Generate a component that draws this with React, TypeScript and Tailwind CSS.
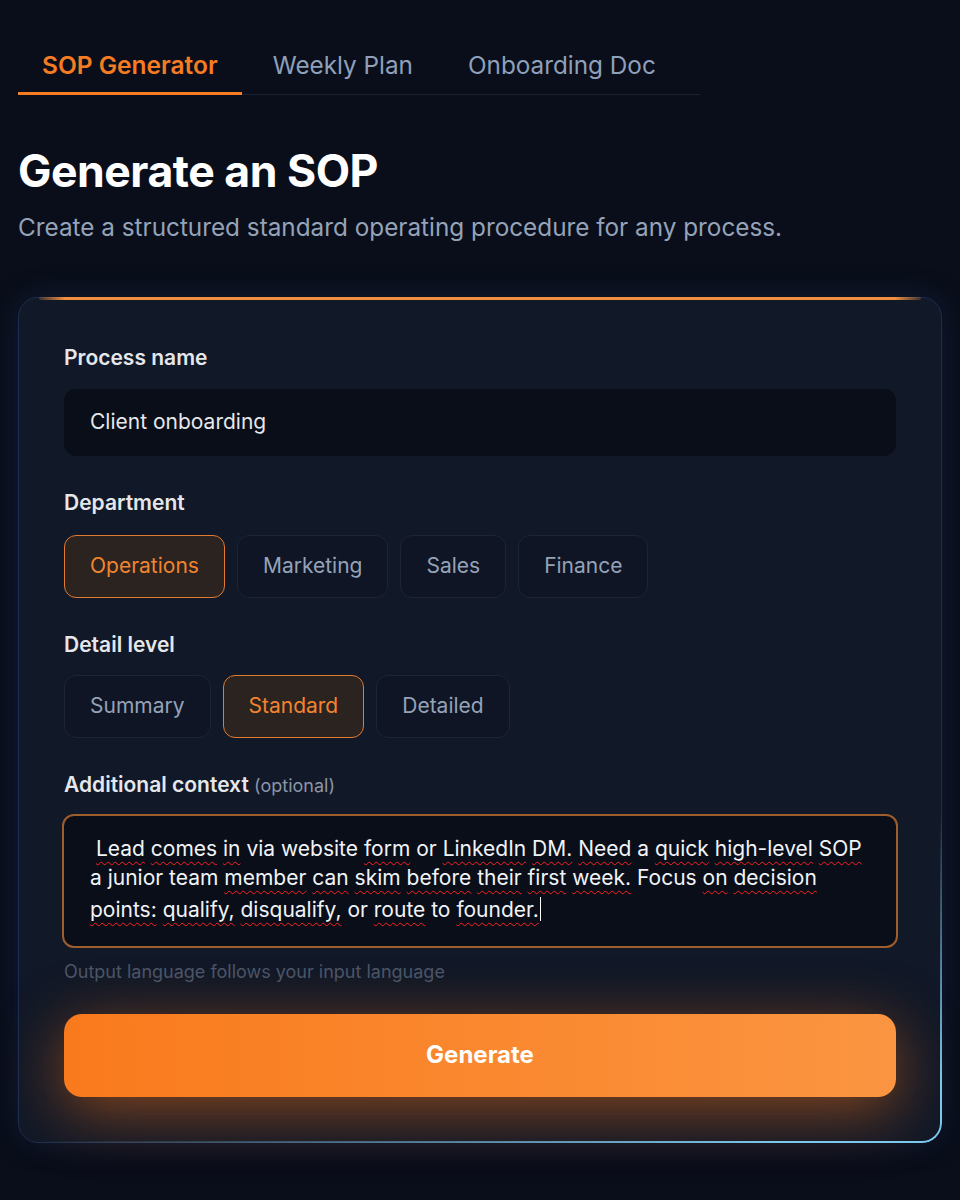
import React from "react";

const tabs = ["SOP Generator", "Weekly Plan", "Onboarding Doc"];
const departments = ["Operations", "Marketing", "Sales", "Finance"];
const levels = ["Summary", "Standard", "Detailed"];

// words flagged by the spell checker in the reference
const contextWords: [string, boolean][] = [
  ["Lead", true], ["comes", true], ["in", true], ["via", false], ["website", false],
  ["form", true], ["or", false], ["LinkedIn", true], ["DM.", true], ["Need", true],
  ["a", false], ["quick", true], ["high-level", true], ["SOP", true], ["a", false],
  ["junior", false], ["team", false], ["member", true], ["can", true], ["skim", true],
  ["before", true], ["their", true], ["first", true], ["week.", true], ["Focus", false],
  ["on", true], ["decision", true], ["points:", true], ["qualify,", true],
  ["disqualify,", true], ["or", false], ["route", true], ["to", false], ["founder.", true],
];

function Chip({ label, active }: { label: string; active?: boolean }) {
  return (
    <button
      className={
        active
          ? "h-[63px] px-[25px] rounded-xl border border-[#e27a2f] bg-[#2a2320] text-[21px] text-[#f2842f]"
          : "h-[63px] px-[25px] rounded-xl border border-[#1c2435] bg-[#0f1524] text-[21px] text-[#94a3b8]"
      }
    >
      {label}
    </button>
  );
}

export default function App() {
  return (
    <div className="min-h-[1200px] bg-[#0a0e1a] px-[18px] pt-[47px] font-['Inter','Noto_Sans',sans-serif]">
      {/* tabs */}
      <div className="flex w-[682px] gap-[7px] border-b border-[#1a2030]">
        {tabs.map((t, i) => (
          <div
            key={t}
            className={
              i === 0
                ? "-mb-px border-b-[3px] border-[#f57c22] px-6 pb-[8px] text-[24.5px] leading-9 font-semibold text-[#f57c22]"
                : "px-6 pb-[11px] text-[24.3px] leading-9 text-[#8ea0ba]"
            }
          >
            {t}
          </div>
        ))}
      </div>

      <h1 className="mt-[54px] text-[44.6px] font-bold leading-none tracking-[-0.5px] text-white">
        Generate an SOP
      </h1>
      <p className="mt-[17px] text-[24.3px] leading-8 text-[#94a3b8]">
        Create a structured standard operating procedure for any process.
      </p>

      {/* card */}
      <div className="relative mt-[54px] w-[924px] rounded-[20px] border border-[#1b2e50] bg-[#111827] px-[45px] pt-[45px] pb-[45px] shadow-[0_0_30px_rgba(30,64,120,0.25)]">
        <div className="absolute -top-px left-[20px] right-[20px] h-[3px] rounded-full bg-[linear-gradient(90deg,rgba(245,140,60,0.2),#f2903f_3%,#f2903f_97%,rgba(245,140,60,0.2))]" />
        <div className="pointer-events-none absolute -inset-px rounded-[20px] border-2 border-[#7cc8ec] [mask-image:linear-gradient(160deg,transparent_72%,black_95%)]" />

        <div className="text-[21px] leading-[30px] font-semibold text-[#e5e7eb]">Process name</div>
        <div className="mt-[16px] flex h-[67px] items-center rounded-xl bg-[#0a0e19] px-[26px] text-[21px] text-[#e5e7eb]">
          Client onboarding
        </div>

        <div className="mt-[32px] text-[21px] leading-[30px] font-semibold text-[#e5e7eb]">Department</div>
        <div className="mt-[17px] flex gap-3">
          {departments.map((d, i) => (
            <Chip key={d} label={d} active={i === 0} />
          ))}
        </div>

        <div className="mt-[32px] text-[21px] leading-[30px] font-semibold text-[#e5e7eb]">Detail level</div>
        <div className="mt-[15px] flex gap-3">
          {levels.map((l, i) => (
            <Chip key={l} label={l} active={i === 1} />
          ))}
        </div>

        <div className="mt-[32px] text-[21px] leading-[30px] font-semibold text-[#e5e7eb]">
          Additional context <span className="text-[18px] font-normal text-[#8b95a7]">(optional)</span>
        </div>
        <div className="-mx-[2px] mt-[13px] h-[134px] rounded-xl border-2 border-[#a05d2c] bg-[#0a0e19] px-[26px] pt-[18px] text-[21px] leading-[29.5px] text-[#f1f3f6]">
          <span>&nbsp;</span>
          {contextWords.map(([w, bad], i) => (
            <React.Fragment key={i}>
              <span className={bad ? "underline decoration-[#ff2020] decoration-wavy decoration-1 underline-offset-[5px]" : ""}>
                {w}
              </span>
              {i < contextWords.length - 1 ? " " : ""}
            </React.Fragment>
          ))}
          <span className="ml-px inline-block h-[24px] w-px translate-y-[4px] bg-white" />
        </div>
        <div className="mt-[11px] text-[18px] leading-[26px] text-[#4b5566]">Output language follows your input language</div>

        <button className="mt-[29px] flex h-[83px] w-full items-center justify-center rounded-[18px] bg-[linear-gradient(90deg,#f97a1c,#fb9541)] text-[24px] font-bold text-white shadow-[0_14px_60px_rgba(249,115,22,0.5)]">
          Generate
        </button>
      </div>
    </div>
  );
}
